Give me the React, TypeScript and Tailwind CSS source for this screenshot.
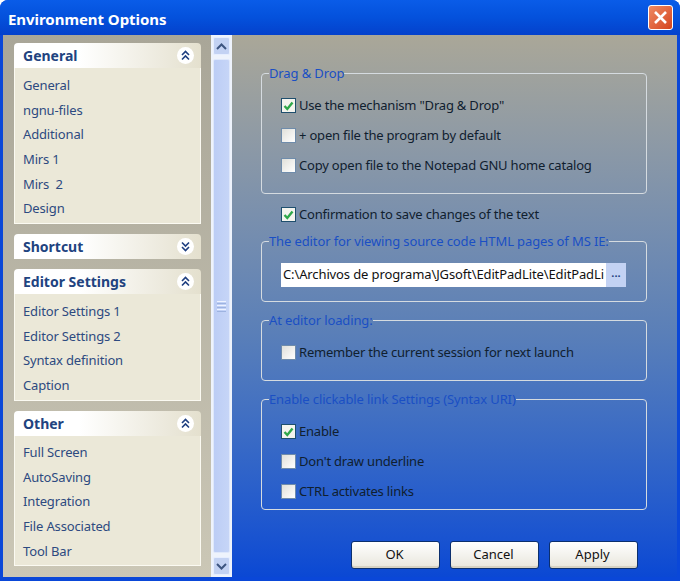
import React from "react";

const font = { tahoma: "font-['Noto_Sans','Open_Sans',sans-serif]" };

type Group = { title: string; open: boolean; items: string[]; body: string };

const groups: Group[] = [
  { title: "General", open: true, items: ["General", "ngnu-files", "Additional", "Mirs 1", "Mirs  2", "Design"], body: "h-[156px] pt-[5px]" },
  { title: "Shortcut", open: false, items: [], body: "" },
  { title: "Editor Settings", open: true, items: ["Editor Settings 1", "Editor Settings 2", "Syntax definition", "Caption"], body: "h-[107px] pt-[5px]" },
  { title: "Other", open: true, items: ["Full Screen", "AutoSaving", "Integration", "File Associated", "Tool Bar"], body: "h-[130px] pt-[4px]" },
];

// double chevron inside the white circle of the group header
function Chevrons({ open }: { open: boolean }) {
  return (
    <span className="flex h-[17px] w-[17px] items-center justify-center rounded-full bg-white">
      <svg width="11" height="11" viewBox="0 0 11 11" fill="none" stroke="#1f3f80" strokeWidth="1.6">
        {open ? (
          <path d="M2 5l3.5-3.5L9 5M2 9.500l3.500-3.500L9 9.500" />
        ) : (
          <path d="M2 1.500L5.500 5 9 1.500M2 6l3.500 3.500L9 6" />
        )}
      </svg>
    </span>
  );
}

function SideGroup({ group }: { group: Group }) {
  return (
    <div>
      <div className="flex h-[25px] items-center justify-between rounded-t-[4px] bg-gradient-to-r from-white from-35% to-[#e4e0ce] pl-[9px] pr-[7px]">
        <span className="text-[14px] font-bold text-[#21437f]">{group.title}</span>
        <Chevrons open={group.open} />
      </div>
      {group.open && (
        <div className={`${group.body} border-x border-b border-[#fbfaf2] bg-[#ebe8d8] pl-[8px]`}>
          {group.items.map((item) => (
            <div key={item} className="h-[24.700px] whitespace-pre text-[13px] leading-[24.700px] tracking-[-0.15px] text-[#2d4a80]">
              {item}
            </div>
          ))}
        </div>
      )}
    </div>
  );
}

function ScrollButton({ up }: { up: boolean }) {
  return (
    <div className="flex h-[18px] w-[17px] items-center justify-center rounded-[2px] border border-[#e6eeff] bg-[#c3d2f3]">
      <svg width="11" height="7" viewBox="0 0 11 7" fill="none" stroke="#3d5580" strokeWidth="2">
        <path d={up ? "M1 6l4.500-4.500L10 6" : "M1 1l4.500 4.500L10 1"} />
      </svg>
    </div>
  );
}

function Check({ label, checked }: { label: string; checked?: boolean }) {
  return (
    <div className="flex h-[15px] items-center gap-[3px]">
      <span
        className={`flex h-[15px] w-[15px] shrink-0 items-center justify-center border ${
          checked ? "border-[#1f4f6e] bg-[#f4f4ee]" : "border-[#6f8cab] bg-gradient-to-br from-[#e0e0da] to-white"
        }`}
      >
        {checked && (
          <svg width="11" height="10" viewBox="0 0 11 10" fill="none" stroke="#2fa84a" strokeWidth="2.400">
            <path d="M1.500 5l2.800 3L9.500 1.500" />
          </svg>
        )}
      </span>
      <span className="whitespace-nowrap text-[13px] tracking-[-0.2px] text-[#10202f]">{label}</span>
    </div>
  );
}

function Box({ legend, className, children }: { legend: string; className: string; children: React.ReactNode }) {
  return (
    <fieldset className={`${className} w-[386px] rounded-[4px] border border-[#d5dbe0] pl-[19px]`}>
      <legend className="-ml-[12px] whitespace-nowrap text-[13px] leading-[16px] tracking-[-0.12px] text-[#1a4fc4]">{legend}</legend>
      {children}
    </fieldset>
  );
}

function WinButton({ label }: { label: string }) {
  return (
    <button className="h-[28px] w-[89px] rounded-[3px] border border-[#0b2f6e] bg-gradient-to-b from-white to-[#e8e6dc] pr-[2px] text-[13px] text-[#111] shadow-[inset_0_-2px_0_#d6d2c2]">
      {label}
    </button>
  );
}

export default function App() {
  return (
    <div className={`${font.tahoma} flex h-[581px] w-[680px] flex-col overflow-hidden rounded-t-[8px] bg-[#0a47d8]`}>
      <div className="flex h-[35px] shrink-0 items-center justify-between bg-gradient-to-b from-[#0a5ce8] via-[#0451dc] to-[#0441cc] pl-[8px] pr-[7px]">
        <span className="pt-[3px] text-[15px] font-bold tracking-[-0.05px] text-white">Environment Options</span>
        <span className="flex h-[25px] w-[25px] items-center justify-center rounded-[3px] border border-white bg-gradient-to-br from-[#ee8a62] to-[#d4421a]">
          <svg width="15" height="15" viewBox="0 0 15 15" stroke="#fff" strokeWidth="2.600" fill="none">
            <path d="M2 2l11 11M13 2L2 13" />
          </svg>
        </span>
      </div>

      <div className="mx-[3px] mb-[4px] flex min-h-0 flex-1">
        {/* side panel */}
        <div className="flex w-[208px] shrink-0 flex-col gap-[10px] bg-gradient-to-b from-[#a9a698] to-[#cbc7b6] pl-[11px] pr-[10px] pt-[8px]">
          {groups.map((g) => (
            <SideGroup key={g.title} group={g} />
          ))}
        </div>

        {/* scrollbar */}
        <div className="flex w-[21px] shrink-0 flex-col items-center justify-between bg-[#eef3fc] py-[2px]">
          <ScrollButton up />
          <div className="my-[4px] flex w-[17px] flex-1 items-center justify-center rounded-[2px] border border-[#dfe8fb] bg-gradient-to-r from-[#bccdf5] to-[#c6d5f7]">
            <div className="flex w-[9px] flex-col gap-[1px]">
              <div className="h-[1px] bg-[#eef3ff]" />
              <div className="h-[1px] bg-[#9db3e0]" />
              <div className="h-[1px] bg-[#eef3ff]" />
              <div className="h-[1px] bg-[#9db3e0]" />
              <div className="h-[1px] bg-[#eef3ff]" />
              <div className="h-[1px] bg-[#9db3e0]" />
            </div>
          </div>
          <ScrollButton up={false} />
        </div>

        {/* content */}
        <div className="flex flex-1 flex-col bg-gradient-to-b from-[#aaa798] via-[#5a7fb8] via-55% to-[#0a48d4] pl-[29px] pr-[27px] pt-[30px]">
          <Box legend="Drag & Drop" className="h-[129px] pt-[17px]">
            <div className="flex flex-col gap-[15px]">
              <Check checked label={'Use the mechanism "Drag & Drop"'} />
              <Check label="+ open file the program by default" />
              <Check label="Copy open file to the Notepad GNU home catalog" />
            </div>
          </Box>
          <div className="ml-[20px] mt-[13px]">
            <Check checked label="Confirmation to save changes of the text" />
          </div>
          <Box legend="The editor for viewing source code HTML pages of MS IE:" className="mt-[11px] h-[69px] pt-[14px]">
            <div className="flex h-[24px] w-[345px] items-center justify-between bg-white pl-[2px]">
              <span className="whitespace-nowrap text-[13px] tracking-[-0.12px] text-[#111]">
                C:\Archivos de programa\JGsoft\EditPadLite\EditPadLi
              </span>
              <span className="flex h-[24px] w-[20px] shrink-0 items-center justify-center bg-[#c3d2f3] text-[11px] font-bold leading-none text-[#1f3f80]">
                ···
              </span>
            </div>
          </Box>
          <Box legend="At editor loading:" className="mt-[10px] h-[69px] pt-[17px]">
            <Check label="Remember the current session for next launch" />
          </Box>
          <Box legend="Enable clickable link Settings (Syntax URI)" className="mt-[10px] h-[119px] pt-[17px]">
            <div className="flex flex-col gap-[15px]">
              <Check checked label="Enable" />
              <Check label="Don't draw underline" />
              <Check label="CTRL activates links" />
            </div>
          </Box>
          <div className="ml-[90px] mt-[31px] flex gap-[10px]">
            <WinButton label="OK" />
            <WinButton label="Cancel" />
            <WinButton label="Apply" />
          </div>
        </div>
      </div>
    </div>
  );
}
